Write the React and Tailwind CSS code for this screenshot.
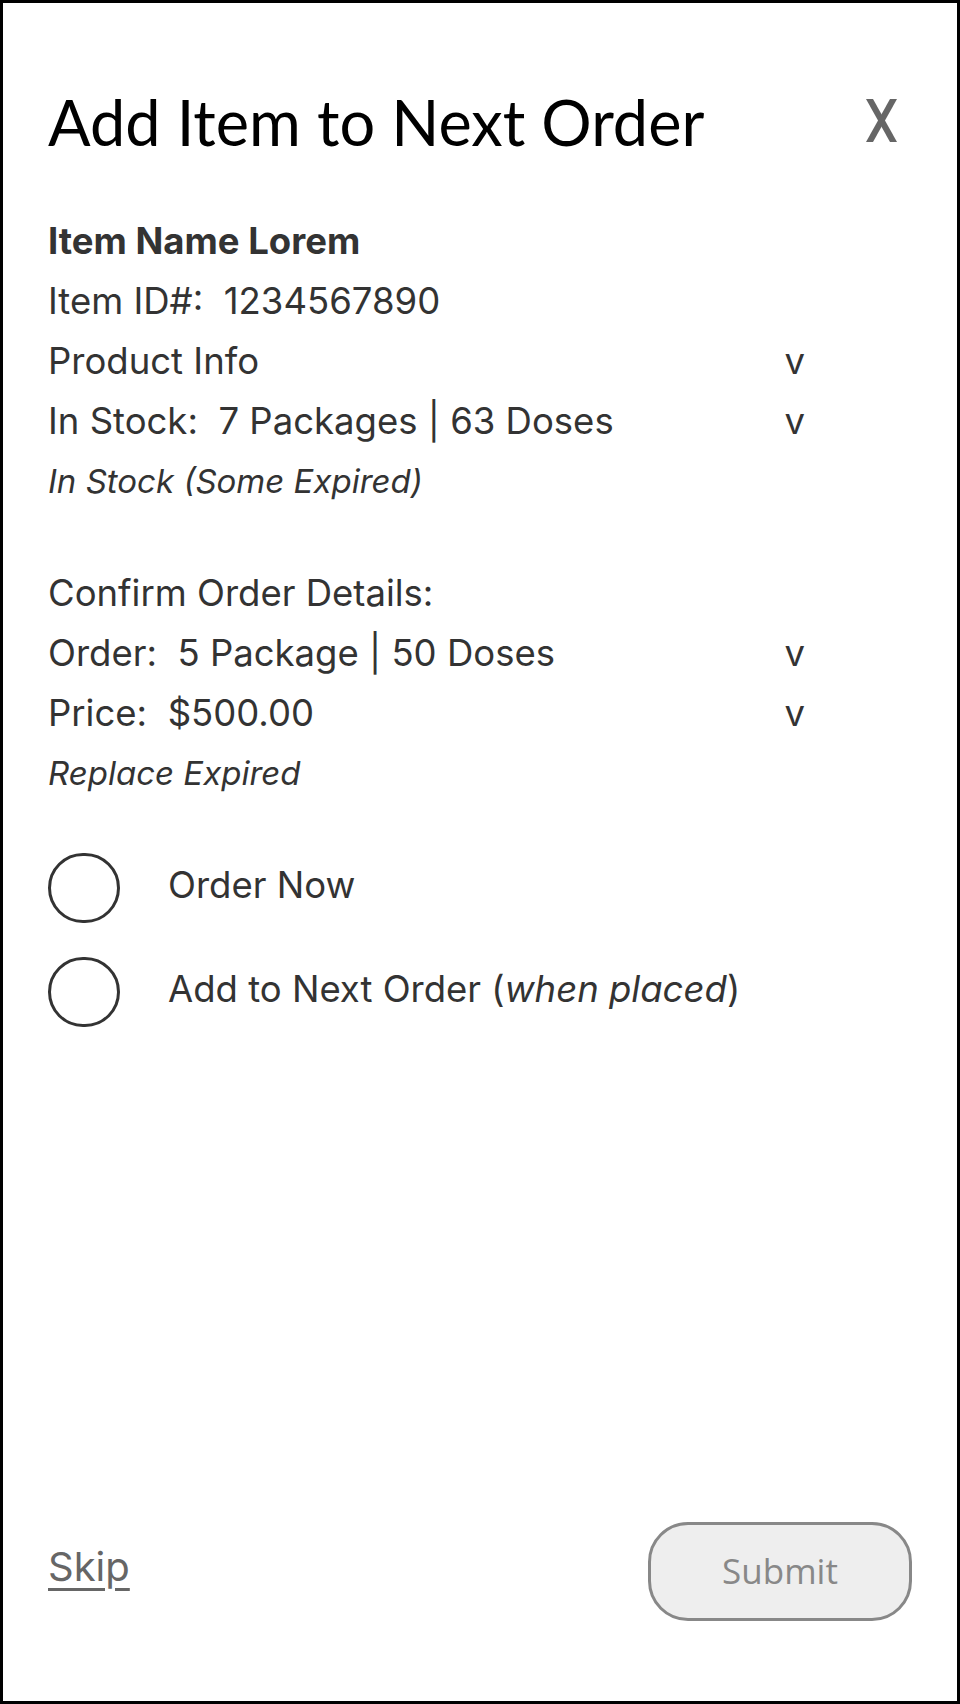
import React from 'react';

const body = { fontFamily: 'Inter, "Liberation Sans", sans-serif' };

function Row({ children, chevron, italic }) {
  return (
    <div className={`flex w-[757px] justify-between whitespace-pre leading-[60px] ${italic ? 'text-[33px] italic' : 'text-[36.5px]'}`}>
      <span>{children}</span>
      {chevron && <span>v</span>}
    </div>
  );
}

function Radio({ children }) {
  return (
    <div className="flex items-center">
      <span className="w-[72px] h-[70px] rounded-full border-[3px] border-[#333] flex-shrink-0" />
      <span className="ml-[48px] -mt-[6px] text-[36.5px]">{children}</span>
    </div>
  );
}

export default function App() {
  return (
    <div className="w-[960px] h-[1704px] border-[3px] border-black bg-white flex flex-col px-[45px] text-[#333]" style={body}>
      {/* Header */}
      <div className="flex items-start justify-between pt-[80px]">
        <h1 className="text-[63px] leading-[77px] text-black" style={{ fontFamily: 'Lato, sans-serif' }}>
          Add Item to Next Order
        </h1>
        <svg width="31" height="43" viewBox="0 0 31 43" className="mt-[16px] mr-[15px]">
          <polygon points="0,0 7,0 31,43 24,43" fill="#666" />
          <polygon points="24,0 31,0 7,43 0,43" fill="#666" />
        </svg>
      </div>

      {/* Item details */}
      <div className="mt-[51px]">
        <div className="text-[36.5px] leading-[60px] font-bold">Item Name Lorem</div>
        <Row>Item ID#:  1234567890</Row>
        <Row chevron>Product Info</Row>
        <Row chevron>In Stock:  7 Packages | 63 Doses</Row>
        <Row italic>In Stock (Some Expired)</Row>
      </div>

      <div className="mt-[52px]">
        <Row>Confirm Order Details:</Row>
        <Row chevron>Order:  5 Package | 50 Doses</Row>
        <Row chevron>Price:  $500.00</Row>
        <Row italic>Replace Expired</Row>
      </div>

      {/* Options */}
      <div className="mt-[50px] flex flex-col gap-[34px]">
        <Radio>Order Now</Radio>
        <Radio>
          Add to Next Order (<em>when placed</em>)
        </Radio>
      </div>

      {/* Footer */}
      <div className="mt-auto mb-[80px] flex items-center justify-between">
        <a className="text-[40px] leading-[40px] text-[#666] underline decoration-[3px] underline-offset-[7px] -mt-[10px]">
          Skip
        </a>
        <button
          className="w-[264px] h-[99px] rounded-[40px] border-[3px] border-[#888] bg-[#eee] text-[#888] text-[35px]"
          style={{ fontFamily: '"Open Sans", sans-serif' }}
        >
          Submit
        </button>
      </div>
    </div>
  );
}
